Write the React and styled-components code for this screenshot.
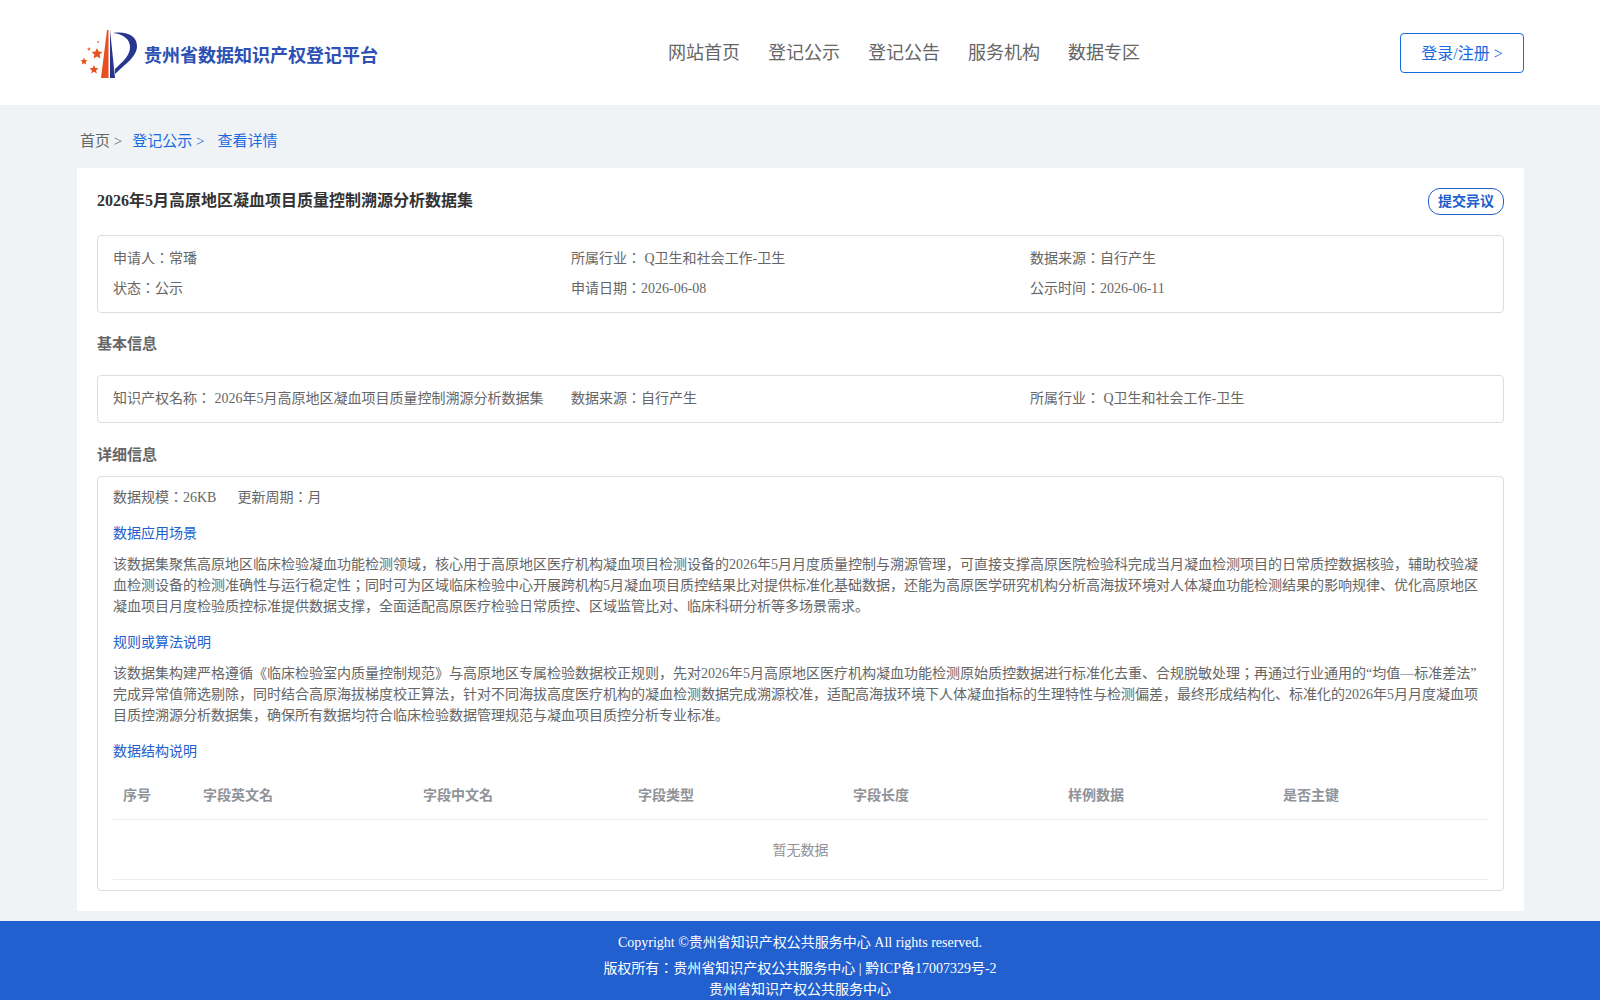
import React from 'react'
import styled, { createGlobalStyle } from 'styled-components'

const GlobalStyle = createGlobalStyle`
  * { box-sizing: border-box; }
  html, body { margin: 0; padding: 0; }
  body {
    background: #eff3f6;
    font-family: "Liberation Serif", "Noto Sans CJK JP", serif;
    color: #666;
  }
`

const navItems = ['网站首页', '登记公示', '登记公告', '服务机构', '数据专区']
const columns = [
  { name: '序号', width: 80 },
  { name: '字段英文名', width: 220 },
  { name: '字段中文名', width: 215 },
  { name: '字段类型', width: 215 },
  { name: '字段长度', width: 215 },
  { name: '样例数据', width: 215 },
  { name: '是否主键', width: 215 },
]

const Logo = () => (
  <svg width="58" height="52" viewBox="0 0 58 52">
    <path d="M21 51 L27 3 L28.500 3 L28.500 51 Z" fill="#e8501f" />
    <path d="M30 3 L35 51 L30 51 Z" fill="#27358f" />
    <path d="M33 6 C47 4 57 9 57 19 C57 30 45 37 35 47 L35 42 C43 34 50 29 50 20 C50 12 43 7 33 6 Z" fill="#27358f" />
    <polygon points="17,21 18.600,24.500 22.500,25 19.600,27.500 20.400,31.500 17,29.500 13.600,31.500 14.400,27.500 11.500,25 15.400,24.500" fill="#e8501f" />
    <polygon points="4,30.500 5,33 7.500,33.200 5.600,35 6.200,37.500 4,36.200 1.800,37.500 2.400,35 0.500,33.200 3,33" fill="#e8501f" />
    <polygon points="14,38 15.300,41 18.500,41.300 16,43.400 16.800,46.500 14,44.800 11.200,46.500 12,43.400 9.500,41.300 12.700,41" fill="#e8501f" />
    <circle cx="9" cy="22" r="1.500" fill="#ef7d50" />
    <circle cx="18" cy="15" r="1" fill="#ef7d50" />
  </svg>
)

const App = () => {
  return (
    <Page>
      <GlobalStyle />
      <Header>
        <Brand>
          <Logo />
          <BrandName>贵州省数据知识产权登记平台</BrandName>
        </Brand>
        <Nav>
          {navItems.map(item => <NavLink key={item}>{item}</NavLink>)}
        </Nav>
        <LoginButton>登录/注册 &gt;</LoginButton>
      </Header>

      <Main>
        <Crumbs>
          <span>首页 &gt;</span>
          <CrumbLink>登记公示 &gt;</CrumbLink>
          <CrumbLink $last>查看详情</CrumbLink>
        </Crumbs>

        <Card>
          <TitleRow>
            <Title>2026年5月高原地区凝血项目质量控制溯源分析数据集</Title>
            <ObjectionTag>提交异议</ObjectionTag>
          </TitleRow>

          <InfoBox>
            <InfoGrid>
              <span>申请人：常璠</span>
              <span>所属行业： Q卫生和社会工作-卫生</span>
              <span>数据来源：自行产生</span>
              <span>状态：公示</span>
              <span>申请日期：2026-06-08</span>
              <span>公示时间：2026-06-11</span>
            </InfoGrid>
          </InfoBox>

          <SectionHeading>基本信息</SectionHeading>
          <InfoBox>
            <InfoGrid>
              <span>知识产权名称： 2026年5月高原地区凝血项目质量控制溯源分析数据集</span>
              <span>数据来源：自行产生</span>
              <span>所属行业： Q卫生和社会工作-卫生</span>
            </InfoGrid>
          </InfoBox>

          <SectionHeading $tight>详细信息</SectionHeading>
          <DetailBox>
            <ScaleRow>
              <span>数据规模：26KB</span>
              <span>更新周期：月</span>
            </ScaleRow>

            <BlockLabel>数据应用场景</BlockLabel>
            <Paragraph>该数据集聚焦高原地区临床检验凝血功能检测领域，核心用于高原地区医疗机构凝血项目检测设备的2026年5月月度质量控制与溯源管理，可直接支撑高原医院检验科完成当月凝血检测项目的日常质控数据核验，辅助校验凝血检测设备的检测准确性与运行稳定性；同时可为区域临床检验中心开展跨机构5月凝血项目质控结果比对提供标准化基础数据，还能为高原医学研究机构分析高海拔环境对人体凝血功能检测结果的影响规律、优化高原地区凝血项目月度检验质控标准提供数据支撑，全面适配高原医疗检验日常质控、区域监管比对、临床科研分析等多场景需求。</Paragraph>

            <BlockLabel>规则或算法说明</BlockLabel>
            <Paragraph>该数据集构建严格遵循《临床检验室内质量控制规范》与高原地区专属检验数据校正规则，先对2026年5月高原地区医疗机构凝血功能检测原始质控数据进行标准化去重、合规脱敏处理；再通过行业通用的“均值—标准差法”<wbr />完成异常值筛选剔除，同时结合高原海拔梯度校正算法，针对不同海拔高度医疗机构的凝血检测数据完成溯源校准，适配高海拔环境下人体凝血指标的生理特性与检测偏差，最终形成结构化、标准化的2026年5月月度凝血项目质控溯源分析数据集，确保所有数据均符合临床检验数据管理规范与凝血项目质控分析专业标准。</Paragraph>

            <BlockLabel>数据结构说明</BlockLabel>
            <FieldTable>
              <thead>
                <tr>
                  {columns.map(col => (
                    <HeadCell key={col.name} style={{ width: col.width }}>{col.name}</HeadCell>
                  ))}
                </tr>
              </thead>
              <tbody>
                <tr>
                  <EmptyCell colSpan={columns.length}>暂无数据</EmptyCell>
                </tr>
              </tbody>
            </FieldTable>
          </DetailBox>
        </Card>
      </Main>

      <Footer>
        <FooterLine $top>Copyright ©贵州省知识产权公共服务中心 All rights reserved.</FooterLine>
        <FooterLine>版权所有：贵州省知识产权公共服务中心 | 黔ICP备17007329号-2</FooterLine>
        <FooterLine>贵州省知识产权公共服务中心</FooterLine>
      </Footer>
    </Page>
  )
}

const Page = styled.div`
  min-height: 1000px;
  display: flex;
  flex-direction: column;
`

const Header = styled.header`
  height: 105px;
  background: #fff;
  padding: 0 76px 0 80px;
  display: grid;
  grid-template-columns: 588px 1fr auto;
  align-items: center;
`

const Brand = styled.div`
  display: flex;
  align-items: center;
  gap: 6px;
`

const BrandName = styled.div`
  font-size: 18px;
  font-weight: 700;
  color: #2c50b4;
  padding-top: 2px;
`

const Nav = styled.nav`
  display: flex;
  gap: 28px;
`

const NavLink = styled.a`
  font-size: 18px;
  color: #666;
  line-height: 24px;
`

const LoginButton = styled.button`
  justify-self: end;
  width: 124px;
  height: 40px;
  padding: 0 0 2px;
  background: #fff;
  border: 1px solid #1a6ae0;
  border-radius: 4px;
  color: #1a6ae0;
  font-family: inherit;
  font-size: 16px;
`

const Main = styled.main`
  padding: 0 76px 10px 77px;
`

const Crumbs = styled.div`
  height: 63px;
  padding: 5px 3px 0;
  display: flex;
  align-items: center;
  font-size: 15px;
  color: #666;
`

const CrumbLink = styled.a`
  color: #1a6ae0;
  margin-left: ${props => (props.$last ? 13 : 10)}px;
`

const Card = styled.section`
  background: #fff;
  padding: 20px;
`

const TitleRow = styled.div`
  display: flex;
  justify-content: space-between;
  align-items: flex-start;
  height: 47px;
`

const Title = styled.h1`
  margin: 1px 0 0;
  font-size: 16px;
  line-height: 24px;
  font-weight: 700;
  color: #333;
`

const ObjectionTag = styled.span`
  width: 76px;
  height: 27px;
  padding-bottom: 3px;
  border: 1px solid #2060cc;
  border-radius: 12px;
  color: #2060cc;
  font-size: 14px;
  font-weight: 700;
  display: flex;
  align-items: center;
  justify-content: center;
`

const InfoBox = styled.div`
  border: 1px solid #ddd;
  border-radius: 4px;
  padding: 12px 15px 13px;
`

const InfoGrid = styled.div`
  display: grid;
  grid-template-columns: 458px 459px 1fr;
  row-gap: 9px;
  font-size: 14px;
  line-height: 21px;
  color: #666;
`

const SectionHeading = styled.h2`
  margin: 0;
  height: ${props => (props.$tight ? 53 : 62)}px;
  padding: ${props => (props.$tight ? '8px 0 0' : '0 0 4px')};
  display: flex;
  align-items: center;
  font-size: 15px;
  font-weight: 700;
  color: #666;
`

const DetailBox = styled.div`
  border: 1px solid #ddd;
  border-radius: 4px;
  padding: 0 15px 10px;
  font-size: 14px;
`

const ScaleRow = styled.div`
  display: flex;
  gap: 21px;
  height: 38px;
  margin-bottom: 8px;
  align-items: center;
  color: #666;
`

const BlockLabel = styled.div`
  color: #2060cc;
  line-height: 21px;
`

const Paragraph = styled.p`
  margin: 10px 0 15px;
  line-height: 21px;
  color: #666;
`

const FieldTable = styled.table`
  width: 100%;
  margin-top: 9px;
  border-collapse: collapse;
  table-layout: fixed;
`

const HeadCell = styled.th`
  height: 48px;
  padding: 0 10px 2px;
  text-align: left;
  font-size: 14px;
  font-weight: 700;
  color: #909399;
  border-bottom: 1px solid #ebeef5;
`

const EmptyCell = styled.td`
  height: 60px;
  padding-bottom: 2px;
  text-align: center;
  color: #909399;
  border-bottom: 1px solid #ebeef5;
`

const Footer = styled.footer`
  flex: 1;
  background: #2160ce;
  color: #fff;
  text-align: center;
  font-size: 14px;
`

const FooterLine = styled.div`
  line-height: 21px;
  padding-top: ${props => (props.$top ? 11 : 0)}px;
  margin-bottom: ${props => (props.$top ? 5 : 0)}px;
`

export default App
